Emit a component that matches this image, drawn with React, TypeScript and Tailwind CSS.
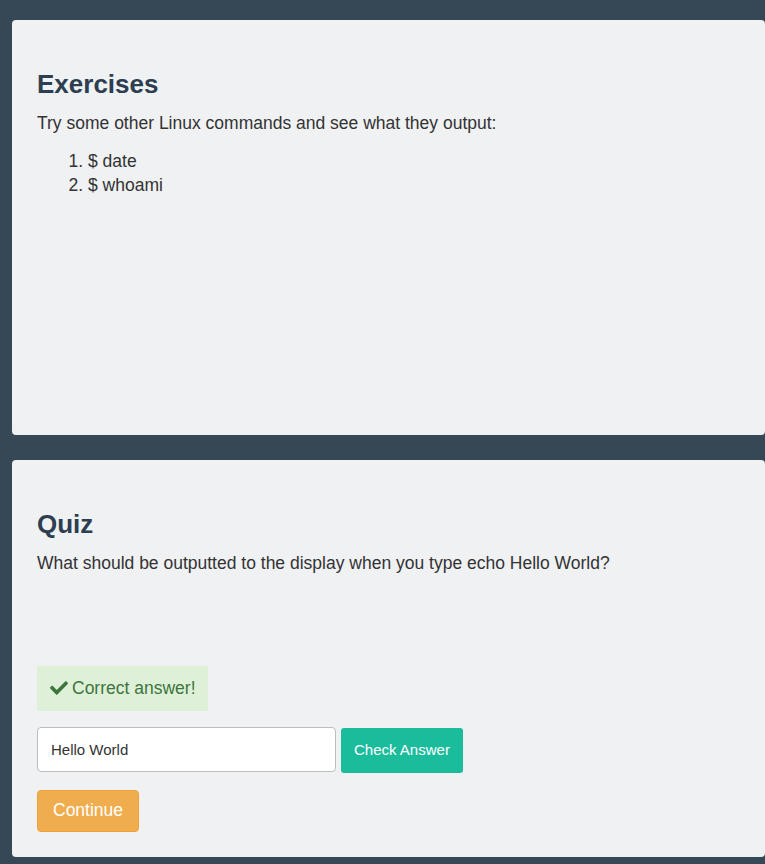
import { FaCheck } from "react-icons/fa";

const font = { fontFamily: '"Liberation Sans", Arial, sans-serif' };

export default function App() {
    return (
        <div className="min-h-[864px] bg-[#364756] pl-[12px] pt-[20px] pb-[7px]" style={font}>
            <section className="h-[415px] rounded-[4px] bg-[#eff1f3] px-[25px] pt-[50px]">
                <h2 className="text-[26px] leading-[1.1] font-bold text-[#2c3e50]">Exercises</h2>
                <p className="mt-[12px] text-[17.5px] leading-[24px] text-[#333]">
                    Try some other Linux commands and see what they output:
                </p>
                <ol className="mt-[14px] list-decimal pl-[51px] text-[17.5px] leading-[24px] text-[#333]">
                    <li>$ date</li>
                    <li>$ whoami</li>
                </ol>
            </section>

            <section className="mt-[25px] h-[397px] rounded-[4px] bg-[#eff1f3] px-[25px] pt-[50px]">
                <h2 className="text-[26px] leading-[1.1] font-bold text-[#2c3e50]">Quiz</h2>
                <p className="mt-[12px] text-[17.5px] leading-[24px] text-[#333]">
                    What should be outputted to the display when you type echo Hello World?
                </p>

                <div className="mt-[91px] flex">
                    <div className="flex h-[45px] items-center gap-[4px] bg-[#dff0d8] pl-[13px] pr-[12px] text-[17.5px] text-[#3c763d]">
                        <FaCheck className="h-[18px] w-[18px]" />
                        <span>Correct answer!</span>
                    </div>
                </div>

                <div className="mt-[16px] flex items-start gap-[5px]">
                    <input
                        type="text"
                        defaultValue="Hello World"
                        className="h-[45px] w-[299px] rounded-[4px] border border-[#bdbdbd] bg-white px-[13px] text-[15px] text-[#333] outline-none"
                    />
                    <button className="mt-[1px] h-[45px] rounded-[3px] bg-[#1abc9c] px-[13px] text-[15px] text-white">
                        Check Answer
                    </button>
                </div>

                <button className="mt-[17px] h-[42px] rounded-[4px] border border-[#eea236] bg-[#f0ad4e] px-[15px] text-[17.5px] text-white">
                    Continue
                </button>
            </section>
        </div>
    );
}
